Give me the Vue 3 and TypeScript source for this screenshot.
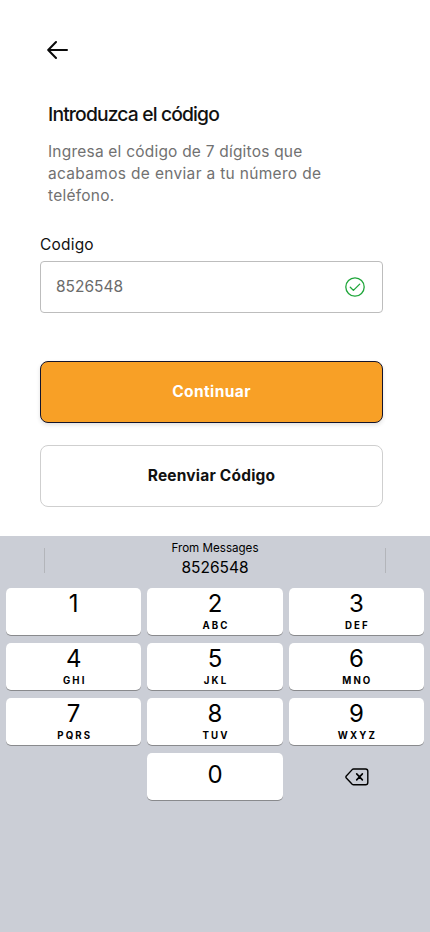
<script setup lang="ts">
interface Key {
  digit: string
  letters: string
}

const code = '8526548'

const keys: Key[] = [
  { digit: '1', letters: '' },
  { digit: '2', letters: 'ABC' },
  { digit: '3', letters: 'DEF' },
  { digit: '4', letters: 'GHI' },
  { digit: '5', letters: 'JKL' },
  { digit: '6', letters: 'MNO' },
  { digit: '7', letters: 'PQRS' },
  { digit: '8', letters: 'TUV' },
  { digit: '9', letters: 'WXYZ' },
]
</script>

<template>
  <div class="screen">
    <main class="content">
      <button class="back" aria-label="Volver">
        <svg width="22" height="20" viewBox="0 0 22 20" fill="none" stroke="#0a0a0a" stroke-width="2" stroke-linecap="round" stroke-linejoin="round">
          <path d="M20 10H1.5M9 2L1.2 10L9 18" />
        </svg>
      </button>
      <h1 class="title">Introduzca el código</h1>
      <p class="lead">
        <span class="l1">Ingresa el código de 7 dígitos que</span><br />
        <span class="l2">acabamos de enviar a tu número de</span><br />
        <span class="l3">teléfono.</span>
      </p>
      <div class="label">Codigo</div>
      <div class="field">
        <span class="value">{{ code }}</span>
        <svg class="check" width="20" height="20" viewBox="0 0 20 20" fill="none" stroke="#1fa63a" stroke-width="1.3" stroke-linecap="round" stroke-linejoin="round">
          <circle cx="10" cy="10" r="9.2" />
          <path d="M5.3 10.2L8.4 13.4L14.7 7.1" />
        </svg>
      </div>
      <button class="btn primary"><span>Continuar</span></button>
      <button class="btn secondary"><span>Reenviar Código</span></button>
    </main>

    <section class="keyboard">
      <div class="suggestions">
        <i class="divider"></i>
        <div class="suggestion">
          <div class="source">From Messages</div>
          <div class="suggested">{{ code }}</div>
        </div>
        <i class="divider"></i>
      </div>
      <div class="keys">
        <button v-for="key in keys" :key="key.digit" class="key">
          <span class="digit">{{ key.digit }}</span>
          <span class="letters">{{ key.letters }}</span>
        </button>
        <span></span>
        <button class="key zero"><span class="digit">0</span></button>
        <button class="erase" aria-label="Borrar">
          <svg width="24" height="18" viewBox="0 0 24 18" fill="none" stroke="#000" stroke-width="1.4" stroke-linejoin="round" stroke-linecap="round">
            <path d="M8.6 1H20.6Q22.8 1 22.8 3.2V14.6Q22.8 16.8 20.6 16.8H8.6Q7.8 16.8 7.2 16.2L1.3 10Q.5 9 1.3 8L7.2 1.6Q7.8 1 8.6 1Z" />
            <path d="M11.7 5.9L17.4 11.9M17.4 5.9L11.7 11.9" stroke-width="1.6" />
          </svg>
        </button>
      </div>
    </section>
  </div>
</template>

<style>
body {
  margin: 0;
  background: #fff;
}
</style>

<style scoped>
.screen {
  box-sizing: border-box;
  width: 430px;
  height: 932px;
  display: flex;
  flex-direction: column;
  overflow: hidden;
  background: #fff;
  color: #111;
  font-family: Inter, "Liberation Sans", sans-serif;
}
button {
  padding: 0;
  border: 0;
  background: none;
  font: inherit;
  color: inherit;
}
.content {
  box-sizing: border-box;
  height: 536px;
  flex: none;
  display: flex;
  flex-direction: column;
  align-items: stretch;
  padding: 40px 47px 0 40px;
}
.back {
  width: 22px;
  height: 20px;
  margin-left: 7px;
}
.back svg,
.erase svg {
  display: block;
}
.title {
  margin: 40px 0 0 8px;
  font-size: 19.3px;
  line-height: 28px;
  font-weight: 500;
  letter-spacing: -0.85px;
  white-space: nowrap;
}
.lead {
  margin: 13px 0 0 8px;
  font-size: 15.5px;
  line-height: 22px;
  color: #717171;
  white-space: nowrap;
}
.l1 {
  letter-spacing: 0.21px;
}
.l2 {
  letter-spacing: 0.32px;
}
.l3 {
  letter-spacing: 0.25px;
}
.label {
  margin-top: 28px;
  font-size: 15.5px;
  line-height: 20px;
  letter-spacing: 0.2px;
}
.field {
  box-sizing: border-box;
  height: 52px;
  margin-top: 6px;
  padding: 0 17px 0 15px;
  display: flex;
  align-items: center;
  justify-content: space-between;
  border: 1px solid #bdbdbd;
  border-radius: 4px;
}
.value {
  padding-bottom: 1px;
  font-size: 15.5px;
  color: #6b6b6b;
}
.btn {
  box-sizing: border-box;
  height: 62px;
  flex: none;
  padding-bottom: 2px;
  border-radius: 8px;
  font-size: 15.5px;
  font-weight: 700;
  text-align: center;
}
.primary {
  margin-top: 48px;
  border: 1px solid #14142b;
  background: #f8a026;
  color: #fff;
  letter-spacing: 0.4px;
  box-shadow: 0 2px 4px rgba(0, 0, 0, 0.12);
}
.secondary {
  margin-top: 22px;
  border: 1px solid #cfcfcf;
  letter-spacing: 0.2px;
}
.keyboard {
  flex: 1;
  background: #cbced6;
  color: #000;
}
.suggestions {
  height: 52px;
  display: flex;
  justify-content: space-between;
  padding: 0 44px;
}
.divider {
  width: 1px;
  height: 25px;
  margin-top: 12px;
  background: #b3b5ba;
}
.suggestion {
  padding-top: 4px;
  text-align: center;
}
.source {
  font-size: 11.6px;
  line-height: 17px;
}
.suggested {
  font-size: 15.5px;
  line-height: 21px;
}
.keys {
  display: grid;
  grid-template-columns: repeat(3, 1fr);
  grid-auto-rows: 47px;
  gap: 8px 6px;
  padding: 0 6px;
}
.key {
  display: flex;
  flex-direction: column;
  align-items: center;
  border-radius: 5px;
  background: #fff;
  box-shadow: 0 1px 0 #898a8d;
}
.digit {
  height: 32px;
  font-size: 24px;
  line-height: 32px;
  font-weight: 400;
}
.letters {
  font-size: 9.7px;
  line-height: 12px;
  font-weight: 700;
  letter-spacing: 2.1px;
  margin-right: -2.1px;
}
.zero {
  padding-top: 6px;
  box-sizing: border-box;
}
.erase {
  display: flex;
  align-items: center;
  justify-content: center;
  padding-left: 2px;
}
</style>
